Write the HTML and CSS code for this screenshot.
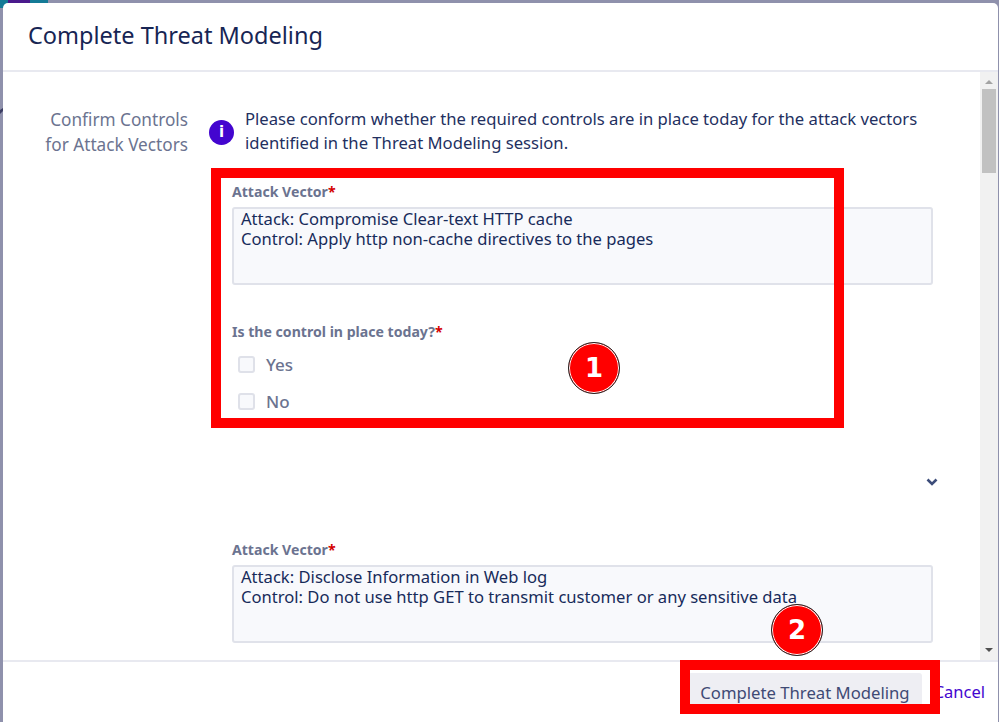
FILE: index.html
```html
<!DOCTYPE html>
<html lang="en">
<head>
    <meta charset="UTF-8">
    <meta name="viewport" content="width=device-width, initial-scale=1.0">
    <title>Complete Threat Modeling</title>
    <link rel="stylesheet" href="styles.css">
</head>
<body>
    <div class="page-behind">
        <div class="app-logo"><span class="app-logo-inner"></span></div>
        <div class="page-title">Consumer Data Portal</div>
        <svg class="nav-caret" width="3" height="6" viewBox="0 0 3 6"><path d="M0 2 3 0v3L0 6z" fill="#3b3d63"/></svg>
    </div>

    <div class="modal">
        <header class="modal-header">
            <h2>Complete Threat Modeling</h2>
        </header>

        <div class="modal-main">
            <div class="modal-body">
                <div class="side-label">Confirm Controls<br>for Attack Vectors</div>
                <div class="form-col">
                    <div class="info-row">
                        <span class="info-icon">i</span>
                        <p>Please conform whether the required controls are in place today for the attack vectors identified in the Threat Modeling session.</p>
                    </div>

                    <div class="vector-block">
                        <label class="field-label">Attack Vector<span class="req">*</span></label>
                        <div class="fake-textarea">Attack: Compromise Clear-text HTTP cache<br>Control: Apply http non-cache directives to the pages</div>
                        <label class="field-label question">Is the control in place today?<span class="req">*</span></label>
                        <div class="check-list">
                            <div class="check-row"><span class="check"></span>Yes</div>
                            <div class="check-row"><span class="check"></span>No</div>
                        </div>
                    </div>

                    <div class="chevron-row">
                        <svg width="12" height="8" viewBox="0 0 12 8"><path d="M1.5 1.5 6 6l4.5-4.5" fill="none" stroke="#3d4d7a" stroke-width="2.6"/></svg>
                    </div>

                    <div class="vector-block second">
                        <label class="field-label">Attack Vector<span class="req">*</span></label>
                        <div class="fake-textarea">Attack: Disclose Information in Web log<br>Control: Do not use http GET to transmit customer or any sensitive data</div>
                    </div>
                </div>
            </div>

            <div class="scrollbar">
                <span class="arrow up"></span>
                <div class="thumb"></div>
                <span class="arrow down"></span>
            </div>
        </div>

        <footer class="modal-footer">
            <button class="btn-complete">Complete Threat Modeling</button>
            <a class="btn-cancel">Cancel</a>
        </footer>
    </div>

    <!-- annotations drawn over the screenshot -->
    <div class="mark-box box-one"></div>
    <div class="mark-box box-two"></div>
    <div class="mark-num num-one">1</div>
    <div class="mark-num num-two">2</div>
</body>
</html>
```

FILE: styles.css
```css
* {
    box-sizing: border-box;
}
html, body {
    height: 100%;
}
body {
    margin: 0;
    height: 722px;
    overflow: hidden;
    position: relative;
    background-color: #8f91ac;
    font-family: "Noto Sans", "Open Sans", sans-serif;
    color: #172b5a;
    padding: 3px 0 0 3px;
}
.page-behind {
    position: absolute;
    top: 0;
    left: 0;
    width: 100%;
    height: 100%;
    overflow: hidden;
}
.app-logo {
    position: absolute;
    left: 0;
    top: 0;
    width: 48px;
    height: 8px;
    background-color: #147a96;
}
.app-logo-inner {
    display: block;
    margin-left: 8px;
    width: 22px;
    height: 3px;
    background-color: #4a1a8c;
}
.page-title {
    position: absolute;
    left: 62px;
    top: -26px;
    font-size: 29px;
    line-height: 30px;
    color: #1c1d3a;
}
.nav-caret {
    position: absolute;
    left: 0;
    top: 108px;
}
.modal {
    position: relative;
    width: 995px;
    height: 719px;
    background-color: white;
    border-radius: 5px 5px 0 0;
    display: flex;
    flex-direction: column;
}
.modal-header {
    height: 69px;
    padding: 0 25px 3px;
    display: flex;
    align-items: center;
    border-bottom: 2px solid #e8e9f0;
    flex-shrink: 0;
}
.modal-header h2 {
    margin: 0;
    font-size: 23.5px;
    font-weight: 400;
    color: #172554;
}
.modal-main {
    height: 588px;
    display: flex;
    overflow: hidden;
    flex-shrink: 0;
}
.modal-body {
    flex: 1;
    display: flex;
    overflow: hidden;
    padding-top: 35px;
}
.side-label {
    width: 185px;
    margin-top: 1px;
    text-align: right;
    font-size: 17.2px;
    line-height: 24.5px;
    color: #6b7390;
    flex-shrink: 0;
}
.form-col {
    flex: 1;
    padding-left: 21px;
    padding-right: 47px;
}
.info-row {
    display: flex;
    align-items: center;
    gap: 11px;
    height: 50px;
    margin-top: -1px;
    margin-right: -40px;
}
.info-icon {
    width: 25px;
    height: 25px;
    margin-top: 2px;
    border-radius: 50%;
    background-color: #4305cf;
    color: white;
    font-family: "DejaVu Sans", sans-serif;
    font-size: 15px;
    font-weight: 700;
    line-height: 25px;
    text-align: center;
    flex-shrink: 0;
}
.info-row p {
    margin: 0;
    font-size: 16.65px;
    line-height: 24.5px;
    color: #23305f;
}
.vector-block {
    margin-top: 27px;
    padding-left: 23px;
}
.vector-block.second {
    margin-top: 55px;
}
.field-label {
    display: block;
    font-size: 14.1px;
    font-weight: 700;
    line-height: 18px;
    color: #6b7390;
}
.req {
    color: #d40000;
}
.fake-textarea {
    height: 78px;
    margin-top: 6px;
    padding: 0 7px;
    background-color: #f8f9fc;
    border: 2px solid #e0e2ea;
    border-radius: 3px;
    font-size: 16.6px;
    line-height: 20px;
    color: #172b5a;
}
.question {
    margin-top: 38px;
}
.check-list {
    margin-top: 5px;
}
.check-row {
    display: flex;
    align-items: center;
    gap: 11px;
    height: 37px;
    padding-left: 6px;
    font-size: 17px;
    font-weight: 500;
    color: #6b7390;
}
.check {
    width: 17px;
    height: 17px;
    background-color: #f8f9fc;
    border: 2px solid #dfe1e9;
    border-radius: 3px;
}
.chevron-row {
    display: flex;
    justify-content: flex-end;
    height: 8px;
    margin-top: 58px;
    margin-right: -5px;
}
.scrollbar {
    width: 18px;
    background-color: #f1f1f1;
    display: flex;
    flex-direction: column;
    align-items: center;
    position: relative;
    flex-shrink: 0;
}
.thumb {
    width: 14px;
    height: 84px;
    margin-top: 5px;
    background-color: #c1c1c1;
}
.arrow {
    width: 0;
    height: 0;
    border-left: 4px solid transparent;
    border-right: 4px solid transparent;
}
.arrow.up {
    margin-top: 8px;
    border-bottom: 4px solid #a3a3a3;
}
.arrow.down {
    position: absolute;
    bottom: 8px;
    border-top: 4px solid #505050;
}
.modal-footer {
    flex: 1;
    border-top: 2px solid #e8e9f0;
    display: flex;
    justify-content: flex-end;
    align-items: flex-start;
    gap: 12px;
    padding-top: 11px;
    padding-right: 13px;
}
.btn-complete {
    height: 38px;
    padding: 0 12px;
    border: none;
    border-radius: 3px;
    background-color: #eeeef3;
    font-family: inherit;
    font-size: 16.7px;
    color: #3f4a75;
}
.btn-cancel {
    font-size: 16.5px;
    line-height: 38px;
    color: #4305cf;
}
.mark-box {
    position: absolute;
    border: 10px solid #ff0000;
}
.box-one {
    left: 211px;
    top: 168px;
    width: 633px;
    height: 260px;
}
.box-two {
    left: 680px;
    top: 660px;
    width: 260px;
    height: 54px;
}
.mark-num {
    position: absolute;
    width: 52px;
    height: 52px;
    border-radius: 50%;
    background-color: #ff0000;
    border: 1px solid #222;
    box-shadow: 0 0 0 1px #fff inset;
    color: white;
    font-family: "DejaVu Sans", sans-serif;
    font-size: 26px;
    font-weight: 700;
    line-height: 51px;
    text-align: center;
}
.num-one {
    left: 568px;
    top: 342px;
}
.num-two {
    left: 771px;
    top: 604px;
}
```
